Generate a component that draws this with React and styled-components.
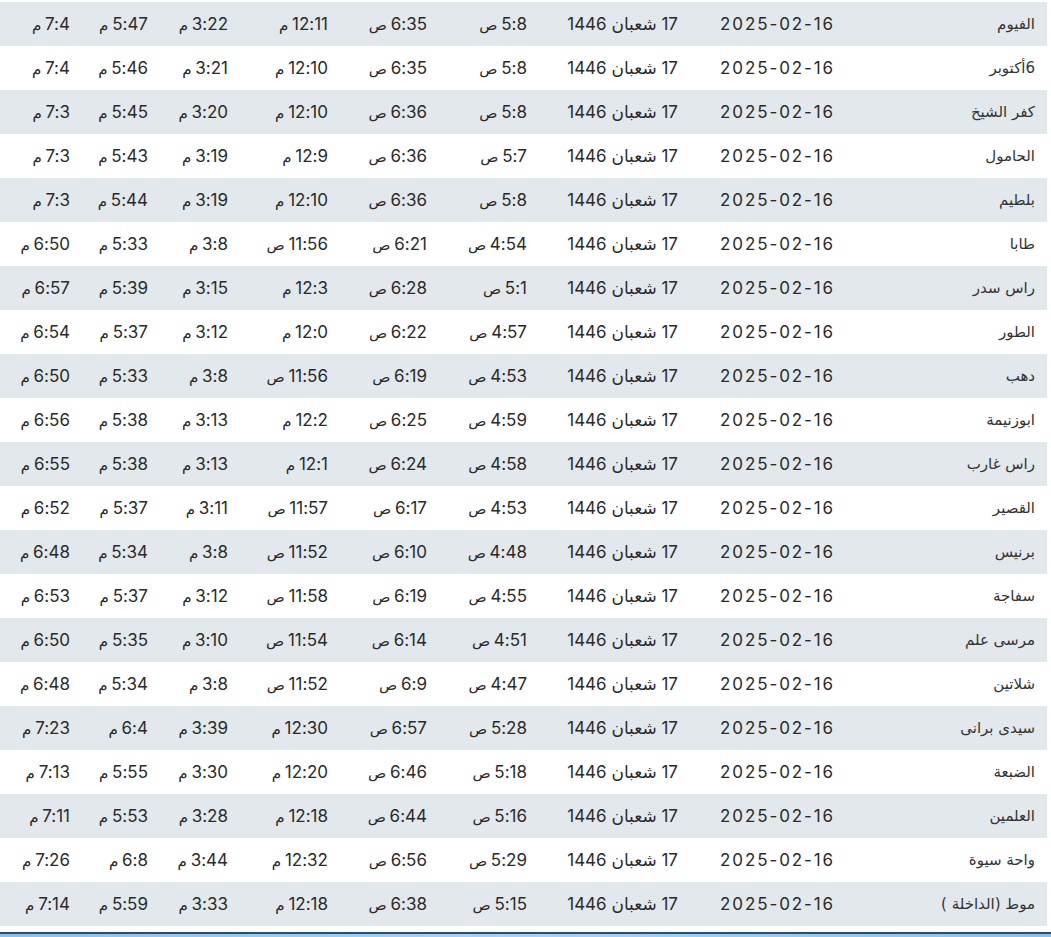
import React from "react";
import styled, { createGlobalStyle } from "styled-components";

const Global = createGlobalStyle`
  html, body { margin: 0; padding: 0; background: #ffffff; }
  body { font-family: "Inter", "DejaVu Sans", sans-serif; }
`;

const Page = styled.div`
  padding-top: 2px;
  width: 1051px;
`;

const Table = styled.table`
  width: 1047px;
  table-layout: fixed;
  border-collapse: collapse;
  direction: rtl;
`;

const Row = styled.tr`
  height: 44px;
  background: ${(p) => (p.$alt ? "#e2e8eb" : "#ffffff")};
`;

const Cell = styled.td`
  padding: 0 12px 0 0;
  text-align: right;
  vertical-align: middle;
  white-space: nowrap;
  overflow: hidden;
  color: #2a2a2a;
  font-size: 17px;
  font-family: "Inter", "DejaVu Sans", sans-serif;
  letter-spacing: ${(p) => (p.$wide ? "1.9px" : "0.9px")};
`;

const TimeCell = styled(Cell)`
  word-spacing: -1px;
`;

const NameCell = styled(Cell)`
  font-size: 15px;
  font-family: "DejaVu Sans", sans-serif;
  letter-spacing: 0;
  color: #333333;
`;

const Suffix = styled.span`
  font-family: "DejaVu Sans", sans-serif;
  font-size: 15px;
  letter-spacing: 0;
`;

const BottomBar = styled.div`
  margin-top: 6px;
  height: 3px;
  border-top: 2px solid #1f4f7c;
  background: linear-gradient(90deg, #8dc0e8 0%, #a9d2f0 50%, #8dc0e8 100%);
`;

const widths = [200, 157, 151, 100, 99, 100, 80, 78, 82];

const rows = [
  ["الفيوم", "5:8 ص", "6:35 ص", "12:11 م", "3:22 م", "5:47 م", "7:4 م"],
  ["6أكتوبر", "5:8 ص", "6:35 ص", "12:10 م", "3:21 م", "5:46 م", "7:4 م"],
  ["كفر الشيخ", "5:8 ص", "6:36 ص", "12:10 م", "3:20 م", "5:45 م", "7:3 م"],
  ["الحامول", "5:7 ص", "6:36 ص", "12:9 م", "3:19 م", "5:43 م", "7:3 م"],
  ["بلطيم", "5:8 ص", "6:36 ص", "12:10 م", "3:19 م", "5:44 م", "7:3 م"],
  ["طابا", "4:54 ص", "6:21 ص", "11:56 ص", "3:8 م", "5:33 م", "6:50 م"],
  ["راس سدر", "5:1 ص", "6:28 ص", "12:3 م", "3:15 م", "5:39 م", "6:57 م"],
  ["الطور", "4:57 ص", "6:22 ص", "12:0 م", "3:12 م", "5:37 م", "6:54 م"],
  ["دهب", "4:53 ص", "6:19 ص", "11:56 ص", "3:8 م", "5:33 م", "6:50 م"],
  ["ابوزنيمة", "4:59 ص", "6:25 ص", "12:2 م", "3:13 م", "5:38 م", "6:56 م"],
  ["راس غارب", "4:58 ص", "6:24 ص", "12:1 م", "3:13 م", "5:38 م", "6:55 م"],
  ["القصير", "4:53 ص", "6:17 ص", "11:57 ص", "3:11 م", "5:37 م", "6:52 م"],
  ["برنيس", "4:48 ص", "6:10 ص", "11:52 ص", "3:8 م", "5:34 م", "6:48 م"],
  ["سفاجة", "4:55 ص", "6:19 ص", "11:58 ص", "3:12 م", "5:37 م", "6:53 م"],
  ["مرسى علم", "4:51 ص", "6:14 ص", "11:54 ص", "3:10 م", "5:35 م", "6:50 م"],
  ["شلاتين", "4:47 ص", "6:9 ص", "11:52 ص", "3:8 م", "5:34 م", "6:48 م"],
  ["سيدى برانى", "5:28 ص", "6:57 ص", "12:30 م", "3:39 م", "6:4 م", "7:23 م"],
  ["الضبعة", "5:18 ص", "6:46 ص", "12:20 م", "3:30 م", "5:55 م", "7:13 م"],
  ["العلمين", "5:16 ص", "6:44 ص", "12:18 م", "3:28 م", "5:53 م", "7:11 م"],
  ["واحة سيوة", "5:29 ص", "6:56 ص", "12:32 م", "3:44 م", "6:8 م", "7:26 م"],
  ["موط (الداخلة )", "5:15 ص", "6:38 ص", "12:18 م", "3:33 م", "5:59 م", "7:14 م"],
];

function Time({ value }) {
  const [num, suf] = value.split(" ");
  return (
    <TimeCell>
      {num} <Suffix>{suf}</Suffix>
    </TimeCell>
  );
}

export default function App() {
  return (
    <Page>
      <Global />
      <Table>
        <colgroup>
          {widths.map((w, i) => (
            <col key={i} style={{ width: w }} />
          ))}
        </colgroup>
        <tbody>
          {rows.map((r, i) => (
            <Row key={i} $alt={i % 2 === 0}>
              <NameCell>{r[0]}</NameCell>
              <Cell $wide>2025-02-16</Cell>
              <Cell>17 شعبان 1446</Cell>
              {r.slice(1).map((t, j) => (
                <Time key={j} value={t} />
              ))}
            </Row>
          ))}
        </tbody>
      </Table>
      <BottomBar />
    </Page>
  );
}
